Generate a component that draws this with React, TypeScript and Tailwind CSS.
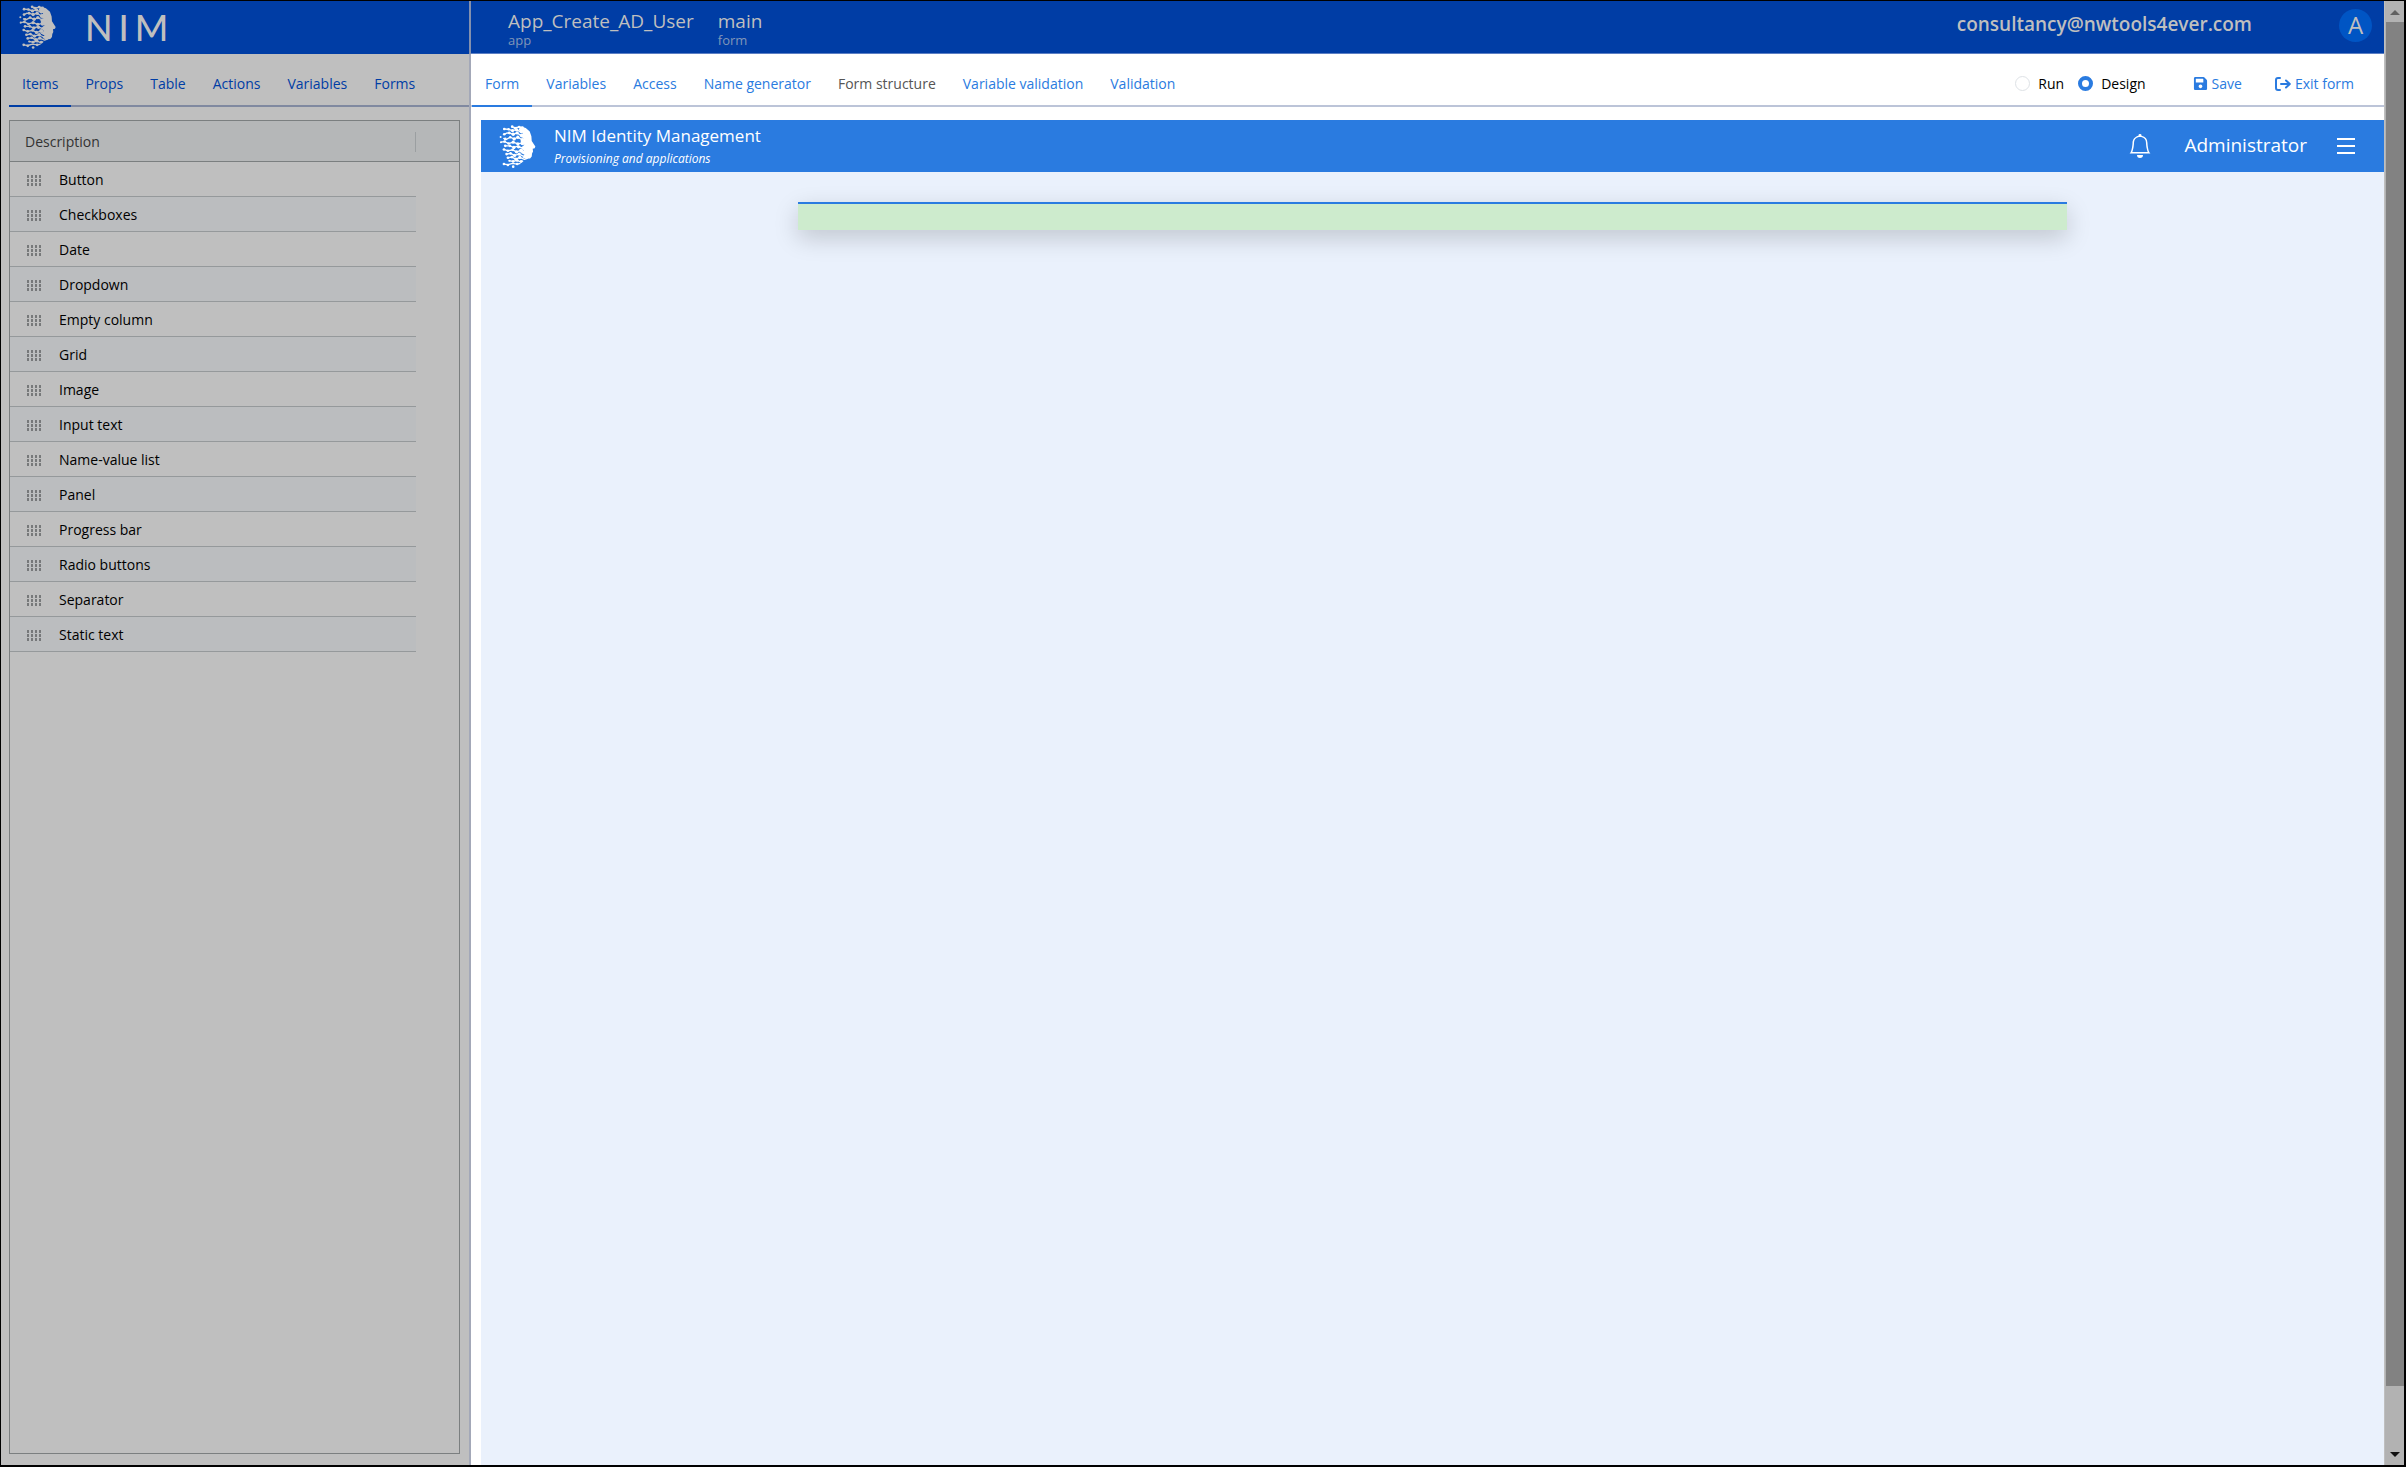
import { FaSave } from "react-icons/fa";
import { BsBell } from "react-icons/bs";

type Tab = { label: string; active?: boolean; muted?: boolean };

const sideTabs: Tab[] = [
  { label: "Items", active: true },
  { label: "Props" },
  { label: "Table" },
  { label: "Actions" },
  { label: "Variables" },
  { label: "Forms" },
];

const mainTabs: Tab[] = [
  { label: "Form", active: true },
  { label: "Variables" },
  { label: "Access" },
  { label: "Name generator" },
  { label: "Form structure", muted: true },
  { label: "Variable validation" },
  { label: "Validation" },
];

const items = [
  "Button",
  "Checkboxes",
  "Date",
  "Dropdown",
  "Empty column",
  "Grid",
  "Image",
  "Input text",
  "Name-value list",
  "Panel",
  "Progress bar",
  "Radio buttons",
  "Separator",
  "Static text",
];

const strands = [
  "M39 5L47 9L60 6L72 12",
  "M15 12L28 13L40 17L52 14L66 22L80 20",
  "M30 24L42 28L54 24L66 32L82 30",
  "M15 28L24 24L32 26",
  "M12 40L20 44L33 37L45 42L56 37L70 45L84 42",
  "M5 52L16 50L28 56L42 52L56 57L70 54L84 60",
  "M18 63L32 63L44 68L56 64L70 70L86 68",
  "M14 74L26 78L40 75L52 81L66 77L80 83",
  "M22 88L34 86L46 92L60 88L72 94L88 92",
  "M26 99L38 97L50 103L62 98L76 104L86 100",
  "M30 108L42 110L54 107L66 112L72 108",
  "M14 118L26 120L40 116L54 118L64 116",
];

const dots = [
  [39, 5, 4], [47, 9, 4], [60, 6, 4], [70, 8, 4], [15, 12, 4], [28, 13, 4], [40, 17, 5], [52, 14, 5], [66, 20, 5],
  [30, 24, 4], [42, 28, 5], [54, 24, 5], [68, 32, 6], [15, 28, 4], [4, 36, 3], [18, 42, 4], [33, 37, 4], [45, 42, 5],
  [56, 37, 5], [70, 45, 6], [5, 52, 3], [16, 50, 4], [28, 56, 4], [42, 52, 5], [56, 57, 5], [70, 55, 6], [18, 63, 4],
  [32, 63, 4], [44, 68, 5], [58, 66, 5], [14, 74, 4], [26, 78, 4], [40, 75, 4], [52, 81, 5], [66, 77, 6], [22, 88, 4],
  [34, 86, 4], [46, 92, 5], [60, 88, 5], [26, 99, 4], [38, 97, 4], [50, 103, 5], [62, 98, 5], [30, 108, 3], [42, 110, 4],
  [54, 107, 4], [66, 110, 4], [14, 118, 4], [26, 121, 4], [54, 118, 4], [42, 126, 4],
];

function FaceLogo({ className }: { className: string }) {
  return (
    <svg viewBox="0 0 110 130" className={className} fill="currentColor" aria-hidden="true">
      <path d="M64 4L80 9L92 20L97 34L98 48L109 65L107 70L101 72L102 80L99 86L98 95L93 101L80 102L70 98L76 90L64 84L74 78L66 68L76 60L64 50L74 42L64 32L72 24L58 15Z" />
      <g fill="none" stroke="currentColor" strokeWidth="4" strokeLinejoin="round">
        {strands.map((d) => (
          <path key={d} d={d} />
        ))}
      </g>
      {dots.map(([x, y, r]) => (
        <circle key={`${x}-${y}`} cx={x} cy={y} r={r} />
      ))}
    </svg>
  );
}

function Grip() {
  return (
    <svg viewBox="0 0 14 11" className="h-[11px] w-3.5 shrink-0" fill="#5f6163" shapeRendering="crispEdges" aria-hidden="true">
      {[0, 4, 8, 12].map((x) => [0, 4, 8].map((y) => <rect key={`${x}-${y}`} x={x} y={y} width="2" height="3" fillOpacity="0.75" />))}
    </svg>
  );
}

function TopBar() {
  return (
    <div className="flex min-w-0 flex-1 items-center border-b border-[#5c7fc4] bg-[#003da5] pr-3 pl-[37px] text-[#bfbfbf]">
      <div className="flex gap-6 pt-px">
        <div>
          <div className="text-[19px] leading-6">App_Create_AD_User</div>
          <div className="text-[13px] leading-3.5 text-[#8096b8]">app</div>
        </div>
        <div>
          <div className="text-[19px] leading-6">main</div>
          <div className="text-[13px] leading-3.5 text-[#8096b8]">form</div>
        </div>
      </div>
      <div className="ml-auto flex items-center gap-[87px] pb-1">
        <span className="text-[19px] font-semibold">consultancy@nwtools4ever.com</span>
        <button className="flex size-[33px] items-center justify-center rounded-full bg-[#0055c4] text-2xl">A</button>
      </div>
    </div>
  );
}

export default function App() {
  return (
    <div className="flex h-screen border border-r-2 border-b-2 border-black bg-white font-['Open_Sans',sans-serif] text-sm text-black">
      <div className="flex min-w-0 flex-1 flex-col">
        <header className="flex h-[53px] shrink-0">
          <div className="flex w-[470px] shrink-0 items-center border-r-2 border-[#8390ae] bg-[#003da5] pb-0.5 pl-[18px] text-[#bfbfbf]">
            <FaceLogo className="h-11 w-[37px]" />
            <h1 className="ml-[29px] flex gap-1.5 font-['Lato',sans-serif] text-4xl leading-[44px] font-medium">
              <span>N</span>
              <span>I</span>
              <span>M</span>
            </h1>
          </div>
          <TopBar />
        </header>

        <div className="flex min-h-0 flex-1">
          <aside className="flex w-[470px] shrink-0 flex-col border-r-2 border-[#a3a8b8] bg-[#bfbfbf]">
            <nav className="ml-2 flex h-[53px] shrink-0 gap-px border-b-2 border-[#8089a0]">
              {sideTabs.map((t) => (
                <button
                  key={t.label}
                  className={
                    t.active
                      ? "-mb-0.5 border-b-2 border-[#003da5] px-[13px] pt-2 text-[#003da5]"
                      : "px-[13px] pt-2 text-[#003da5]"
                  }
                >
                  {t.label}
                </button>
              ))}
            </nav>
            <div className="mt-[13px] mr-[9px] mb-[11px] ml-2 flex-1 border border-[#7b7f80]">
              <table className="w-full table-fixed border-separate border-spacing-0 text-left">
                <thead>
                  <tr className="h-[41px] bg-[#b5b7b8]">
                    <th className="border-b border-[#7b7f80] pt-0.5 pl-[15px] font-normal text-[#333]">
                      <div className="flex items-center justify-between">
                        Description
                        <span className="h-5 w-px bg-[#9b9fa1]" />
                      </div>
                    </th>
                    <th className="w-[43px] border-b border-[#7b7f80]" />
                  </tr>
                </thead>
                <tbody>
                  {items.map((label, i) => (
                    <tr key={label} className="h-[35px]">
                      <td
                        className={
                          i % 2
                            ? "border-b border-[#95999b] bg-[#bbbdbf] pt-0.5 pl-[17px]"
                            : "border-b border-[#95999b] pt-0.5 pl-[17px]"
                        }
                      >
                        <div className="flex items-center gap-[18px]">
                          <Grip />
                          {label}
                        </div>
                      </td>
                      <td />
                    </tr>
                  ))}
                </tbody>
              </table>
            </div>
          </aside>

          <main className="flex min-w-0 flex-1 flex-col">
            <div className="flex h-[53px] shrink-0 border-b-2 border-[#bcc4d8]">
              <nav className="flex gap-px">
                {mainTabs.map((t) => (
                  <button
                    key={t.label}
                    className={
                      t.active
                        ? "-mb-0.5 ml-px border-b-2 border-[#2a7be0] px-[13px] pt-2 text-[#2a7be0]"
                        : t.muted
                          ? "px-[13px] pt-2 text-[#555]"
                          : "px-[13px] pt-2 text-[#2a7be0]"
                    }
                  >
                    {t.label}
                  </button>
                ))}
              </nav>
              <div className="ml-auto flex items-center pt-2 pr-[30px]">
                <label className="flex items-center gap-2">
                  <input type="radio" name="mode" className="size-[15px] appearance-none rounded-full border border-[#dee2e6]" />
                  Run
                </label>
                <label className="ml-3.5 flex items-center gap-2">
                  <input
                    type="radio"
                    name="mode"
                    defaultChecked
                    className="size-[15px] appearance-none rounded-full border-4 border-[#2a7be0] bg-white"
                  />
                  Design
                </label>
                <button className="ml-[47px] flex items-center gap-1 text-[#2a7be0]">
                  <FaSave className="size-[15px]" />
                  Save
                </button>
                <button className="ml-[33px] flex items-center gap-1 text-[#2a7be0]">
                  <svg viewBox="0 0 16 14" className="h-3.5 w-4" fill="none" stroke="currentColor" strokeWidth="2" strokeLinecap="round" strokeLinejoin="round" aria-hidden="true">
                    <path d="M5 1H3a2 2 0 0 0-2 2v8a2 2 0 0 0 2 2h2M6 7h8.500M11 3.500L14.800 7 11 10.500" />
                  </svg>
                  Exit form
                </button>
              </div>
            </div>

            <div className="mt-[13px] ml-2.5 flex flex-1 flex-col bg-[#eaf1fc]">
              <div className="flex h-[52px] shrink-0 items-center bg-[#2a7be0] pr-[29px] pl-[18px] text-white">
                <FaceLogo className="h-[43px] w-[37px]" />
                <div className="ml-[18px] pt-0.5">
                  <div className="text-[17px] leading-6">NIM Identity Management</div>
                  <div className="text-xs leading-[22px] italic">Provisioning and applications</div>
                </div>
                <div className="ml-auto flex items-center">
                  <button aria-label="Notifications">
                    <BsBell className="size-6" />
                  </button>
                  <span className="ml-8 text-[19px]">Administrator</span>
                  <button aria-label="Menu" className="ml-[30px]">
                    <svg viewBox="0 0 18 16" className="h-4 w-[18px]" stroke="currentColor" strokeWidth="2" aria-hidden="true">
                      <path d="M0 1h18M0 8h18M0 15h18" />
                    </svg>
                  </button>
                </div>
              </div>
              <div className="mx-auto mt-[30px] h-7 w-2/3 border-t-2 border-[#2a7be0] bg-[#cdebcd] shadow-[0_8px_24px_rgba(0,0,0,0.18)]" />
            </div>
          </main>
        </div>
      </div>

      <div className="flex w-5 shrink-0 flex-col items-center border-l border-[#bfbfbf] bg-[#b2b2b2]">
        <svg viewBox="0 0 20 21" className="h-[21px] w-5 shrink-0" fill="#606060" aria-hidden="true">
          <path d="M5 14l5-5 5 5z" />
        </svg>
        <div className="h-[1364px] w-[18px] bg-[#828282]" />
        <svg viewBox="0 0 20 21" className="mt-auto h-[21px] w-5 shrink-0" fill="#101010" aria-hidden="true">
          <path d="M5 8h10l-5 5z" />
        </svg>
      </div>
    </div>
  );
}
